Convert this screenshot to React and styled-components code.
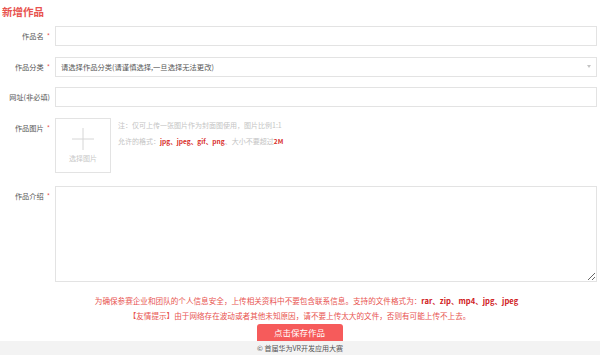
import React from "react";
import styled, { createGlobalStyle } from "styled-components";

const Global = createGlobalStyle`
  html, body { margin: 0; padding: 0; background: #fff; }
  body { font-family: "Noto Sans CJK SC", "Noto Sans", sans-serif; }
  * { box-sizing: border-box; }
`;

const Page = styled.div`
  width: 600px;
  height: 355px;
  display: flex;
  flex-direction: column;
  overflow: hidden;
`;

const Main = styled.div`
  height: 341px;
  padding: 0 3px 0 2px;
  display: flex;
  flex-direction: column;
  overflow: hidden;
`;

const Title = styled.h2`
  margin: 0;
  height: 27px;
  padding-top: 5px;
  font-size: 10.5px;
  line-height: 14px;
  font-weight: 700;
  color: #e8534f;
`;

const Form = styled.div`
  display: flex;
  flex-direction: column;
`;

const Row = styled.div`
  display: grid;
  grid-template-columns: 53px 1fr;
  align-items: start;
  height: ${(p) => p.$h}px;
  margin-bottom: ${(p) => p.$gap}px;
`;

const Label = styled.label`
  display: block;
  height: 20px;
  font-size: 7.2px;
  line-height: 20px;
  color: #555;
  text-align: right;
  padding-right: 5px;
  white-space: nowrap;
`;

const Star = styled.span`
  color: #e8534f;
  margin-left: 3px;
`;

const Input = styled.input`
  display: block;
  height: 20px;
  width: 100%;
  margin: 0;
  border: 1px solid #e3e3e3;
  background: #fff;
  outline: none;
  padding: 0 6px;
  font-family: inherit;
  font-size: 7.5px;
`;

const SelectWrap = styled.div`
  position: relative;
  height: 20px;
`;

const Select = styled.select`
  display: block;
  appearance: none;
  -webkit-appearance: none;
  height: 20px;
  width: 100%;
  margin: 0;
  border: 1px solid #e3e3e3;
  background: #fff;
  outline: none;
  padding: 0 5px;
  font-family: inherit;
  font-size: 7.3px;
  color: #555;
`;

const Arrow = styled.span`
  position: absolute;
  right: 6px;
  top: 8px;
  width: 0;
  height: 0;
  border-left: 2.5px solid transparent;
  border-right: 2.5px solid transparent;
  border-top: 3px solid #c4c4c4;
`;

const ImageRow = styled.div`
  display: flex;
  gap: 7px;
  height: 55px;
`;

const ImageBox = styled.div`
  width: 56px;
  height: 55px;
  border: 1px solid #e3e3e3;
  display: flex;
  flex-direction: column;
  align-items: center;
  padding-top: 9px;
`;

const PickText = styled.div`
  font-size: 7px;
  line-height: 10px;
  color: #c8c8c8;
  margin-top: 3px;
`;

const Notes = styled.div`
  display: flex;
  flex-direction: column;
  gap: 6px;
  padding-top: 2px;
  font-size: 7px;
  line-height: 10px;
  color: #c4c4c4;
`;

const Hot = styled.b`
  color: #d9302c;
  font-weight: 700;
  font-size: 6.6px;
`;

const TextArea = styled.textarea`
  display: block;
  width: 100%;
  height: 96px;
  margin: 0;
  border: 1px solid #e3e3e3;
  outline: none;
  resize: vertical;
  font-family: inherit;
`;

const Notice = styled.div`
  height: 15px;
  text-align: center;
  font-size: 7.6px;
  line-height: 15px;
  color: #e8534f;
  white-space: nowrap;
  overflow: hidden;
  padding-left: ${(p) => p.$shift || 0}px;
  margin-top: ${(p) => p.$top || 0}px;
`;

const Strong = styled.b`
  color: #d0201d;
  font-weight: 700;
`;

const ButtonRow = styled.div`
  display: flex;
  justify-content: center;
  margin-top: 2px;
`;

const SaveButton = styled.button`
  width: 86px;
  height: 17px;
  border: none;
  border-radius: 3px 3px 0 0;
  background: #f65b5b;
  color: #fff;
  font-family: inherit;
  font-size: 8.5px;
  line-height: 17px;
  padding: 0;
  cursor: pointer;
`;

const Footer = styled.footer`
  height: 14px;
  flex-shrink: 0;
  background: #f3f3f3;
  text-align: center;
  font-size: 7px;
  line-height: 14px;
  color: #555;
`;

const Plus = () => (
  <svg width="22" height="22" viewBox="0 0 22 22">
    <line x1="0" y1="11" x2="22" y2="11" stroke="#d6d6d6" strokeWidth="1" />
    <line x1="11" y1="0" x2="11" y2="22" stroke="#d6d6d6" strokeWidth="1" />
  </svg>
);

export default function App() {
  return (
    <Page>
      <Global />
      <Main>
        <Title>新增作品</Title>
        <Form>
          <Row $h={20} $gap={11}>
            <Label>
              作品名<Star>*</Star>
            </Label>
            <Input type="text" />
          </Row>
          <Row $h={20} $gap={10}>
            <Label>
              作品分类<Star>*</Star>
            </Label>
            <SelectWrap>
              <Select defaultValue="">
                <option value="">请选择作品分类(请谨慎选择,一旦选择无法更改)</option>
              </Select>
              <Arrow />
            </SelectWrap>
          </Row>
          <Row $h={20} $gap={11}>
            <Label>网址(非必填)</Label>
            <Input type="text" />
          </Row>
          <Row $h={55} $gap={13}>
            <Label>
              作品图片<Star>*</Star>
            </Label>
            <ImageRow>
              <ImageBox>
                <Plus />
                <PickText>选择图片</PickText>
              </ImageBox>
              <Notes>
                <div>注：仅可上传一张图片作为封面图使用，图片比例1:1</div>
                <div>
                  允许的格式：<Hot>jpg、jpeg、gif、png</Hot>、大小不要超过<Hot>2M</Hot>
                </div>
              </Notes>
            </ImageRow>
          </Row>
          <Row $h={96} $gap={0}>
            <Label>
              作品介绍<Star>*</Star>
            </Label>
            <TextArea />
          </Row>
        </Form>
        <Notice $top={11} $shift={14}>
          为确保参赛企业和团队的个人信息安全，上传相关资料中不要包含联系信息。支持的文件格式为：
          <Strong>rar、zip、mp4、jpg、jpeg</Strong>
        </Notice>
        <Notice>【友情提示】由于网络存在波动或者其他未知原因，请不要上传太大的文件，否则有可能上传不上去。</Notice>
        <ButtonRow>
          <SaveButton>点击保存作品</SaveButton>
        </ButtonRow>
      </Main>
      <Footer>© 首届华为VR开发应用大赛</Footer>
    </Page>
  );
}
